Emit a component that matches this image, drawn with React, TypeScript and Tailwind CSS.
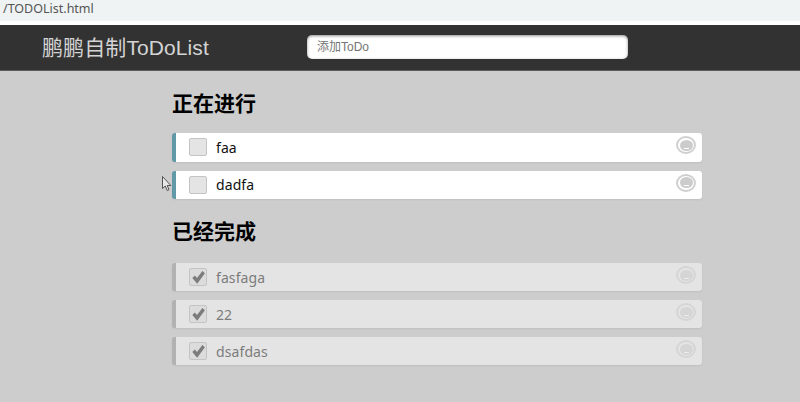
const cjk = "font-['Liberation_Sans','Noto_Sans_CJK_SC',sans-serif]"

function DeleteIcon({ done }: { done: boolean }) {
  return (
    <span className={`flex h-[18px] w-[20px] items-center justify-center rounded-[50%] border-2 ${done ? 'border-[#d5d5d5]' : 'border-[#d0d0d0]'}`}>
      <span className={`flex h-[11px] w-[13px] items-end justify-center rounded-[50%] pb-[2px] ${done ? 'bg-[#d5d5d5]' : 'bg-[#cccccc]'}`}>
        <span className={`h-px w-[5px] ${done ? 'bg-[#ececec]' : 'bg-white'}`} />
      </span>
    </span>
  )
}

function Todo({ text, done = false }: { text: string; done?: boolean }) {
  return (
    <li
      className={`flex items-center rounded-[3px] border-l-[4px] shadow-[0_1px_2px_rgba(0,0,0,0.07)] ${
        done ? 'h-[28px] border-[#b2b2b2] bg-[#e4e4e4]' : 'h-[28.5px] border-[#6199a8] bg-white'
      }`}
    >
      <span
        className={`ml-[13px] flex h-[18px] w-[18px] items-center justify-center rounded-[2px] border border-[#c4c4c4] ${
          done ? 'bg-[#dcdcdc]' : 'bg-[#e4e4e4]'
        }`}
      >
        {done && (
          <svg viewBox="0 0 14 14" className="h-[15px] w-[15px]">
            <path d="M1.2 7.5 L3.6 5.2 L5.6 7.4 L10.6 1 L13 3 L5.8 12.8 Z" fill="#7d7d7d" />
          </svg>
        )}
      </span>
      <span className={`ml-[9px] flex-1 font-['Noto_Sans',sans-serif] text-[14px] tracking-[0.1px] ${done ? 'text-[#7c7c7c]' : 'text-[#111]'}`}>{text}</span>
      <span className="mr-[6px] -mt-[4px]">
        <DeleteIcon done={done} />
      </span>
    </li>
  )
}

export default function App() {
  return (
    <div className={`relative h-[402px] w-[800px] overflow-hidden bg-[#cdcdcd] ${cjk}`}>
      <div className="h-[21px] bg-[#eff3f4] pl-[3px] font-['Noto_Sans',sans-serif] text-[12.5px] leading-[17px] text-[#555]">
        /TODOList.html
      </div>
      <div className="h-[4px] bg-white" />
      <header className="h-[46px] border-b border-[#5c5c5c] bg-[#323232]">
        <div className="flex h-[45px] items-center pl-[42px]">
          <h1 className="w-[265px] text-[21px] font-normal tracking-[0.1px] text-[#d4d4d4]">鹏鹏自制ToDoList</h1>
          <input
            readOnly
            placeholder="添加ToDo"
            className="h-[24px] w-[321px] -translate-y-[1px] rounded-[5px] bg-white pl-[10px] text-[12px] shadow-[inset_0_1px_3px_rgba(0,0,0,0.45)] outline-none placeholder:text-[#757575]"
          />
        </div>
      </header>
      <main className="ml-[172px] w-[530px]">
        <h2 className="mt-[20px] h-[25px] text-[21px] leading-[25px] font-bold text-black">正在进行</h2>
        <ul className="mt-[17px] flex flex-col gap-[9px]">
          <Todo text="faa" />
          <Todo text="dadfa" />
        </ul>
        <h2 className="mt-[20px] h-[25px] text-[21px] leading-[25px] font-bold text-black">已经完成</h2>
        <ul className="mt-[19px] flex flex-col gap-[9px]">
          <Todo text="fasfaga" done />
          <Todo text="22" done />
          <Todo text="dsafdas" done />
        </ul>
      </main>
      {/* mouse cursor caught in the screenshot */}
      <svg viewBox="0 0 10 16" className="absolute top-[176px] left-[162px] h-[16px] w-[10px]">
        <path d="M0.5 0.5 V12.5 L3.3 10 L5.2 14.5 L7 13.7 L5.2 9.5 H8.8 Z" fill="#e8e8e8" stroke="#444" strokeWidth="0.9" />
      </svg>
    </div>
  )
}
